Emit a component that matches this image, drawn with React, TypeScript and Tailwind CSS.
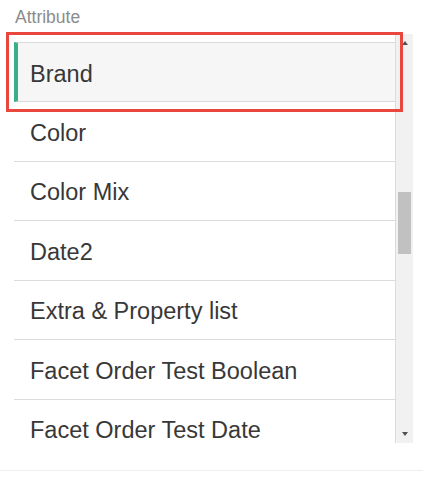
import React from 'react';

const attributes = [
  'Color',
  'Color Mix',
  'Date2',
  'Extra & Property list',
  'Facet Order Test Boolean',
  'Facet Order Test Date',
];

const AttributeList: React.FC = () => {
  return (
    <div className="ml-[14px] flex h-[409px] w-[399px]">
      <div className="flex-1 overflow-hidden border-r border-[#dcdcdc] pt-2">
        <div className="flex h-[60px] items-center border-y border-l-4 border-[#d9d9d9] border-l-[#38ae8c] bg-[#f6f6f6] pl-3 pt-[5px]">
          <span className="text-[23.5px] text-[#383838]">Brand</span>
        </div>
        {attributes.map((name) => (
          <div
            key={name}
            className="flex h-[59.5px] items-center border-b border-[#dcdcdc] pl-4 pt-1"
          >
            <span className="whitespace-nowrap text-[23.5px] text-[#383838]">{name}</span>
          </div>
        ))}
      </div>

      {/* fake scrollbar */}
      <div className="flex w-[17px] flex-col items-center bg-[#f1f1f1] pb-[7px] pt-[7px]">
        <div className="h-0 w-0 border-x-[3.5px] border-b-[4px] border-x-transparent border-b-[#505050]" />
        <div className="mt-[147px] h-[62px] w-[13px] bg-[#c1c1c1]" />
        <div className="mt-auto h-0 w-0 border-x-[3.5px] border-t-[4px] border-x-transparent border-t-[#505050]" />
      </div>
    </div>
  );
};

export default function App() {
  return (
    <div className="relative h-[487px] w-[423px] bg-white font-['Liberation_Sans',Arial,sans-serif]">
      <div className="h-[34px] pl-[15px] pt-[7px] text-[17.5px] leading-[20px] text-[#8c8c8c]">
        Attribute
      </div>
      <AttributeList />
      <div className="mt-[27px] border-t border-[#eeeeee]" />

      {/* highlight outline */}
      <div className="pointer-events-none absolute left-[6px] top-[32px] h-[80px] w-[397px] border-[3px] border-[#e8473d]" />
    </div>
  );
}
